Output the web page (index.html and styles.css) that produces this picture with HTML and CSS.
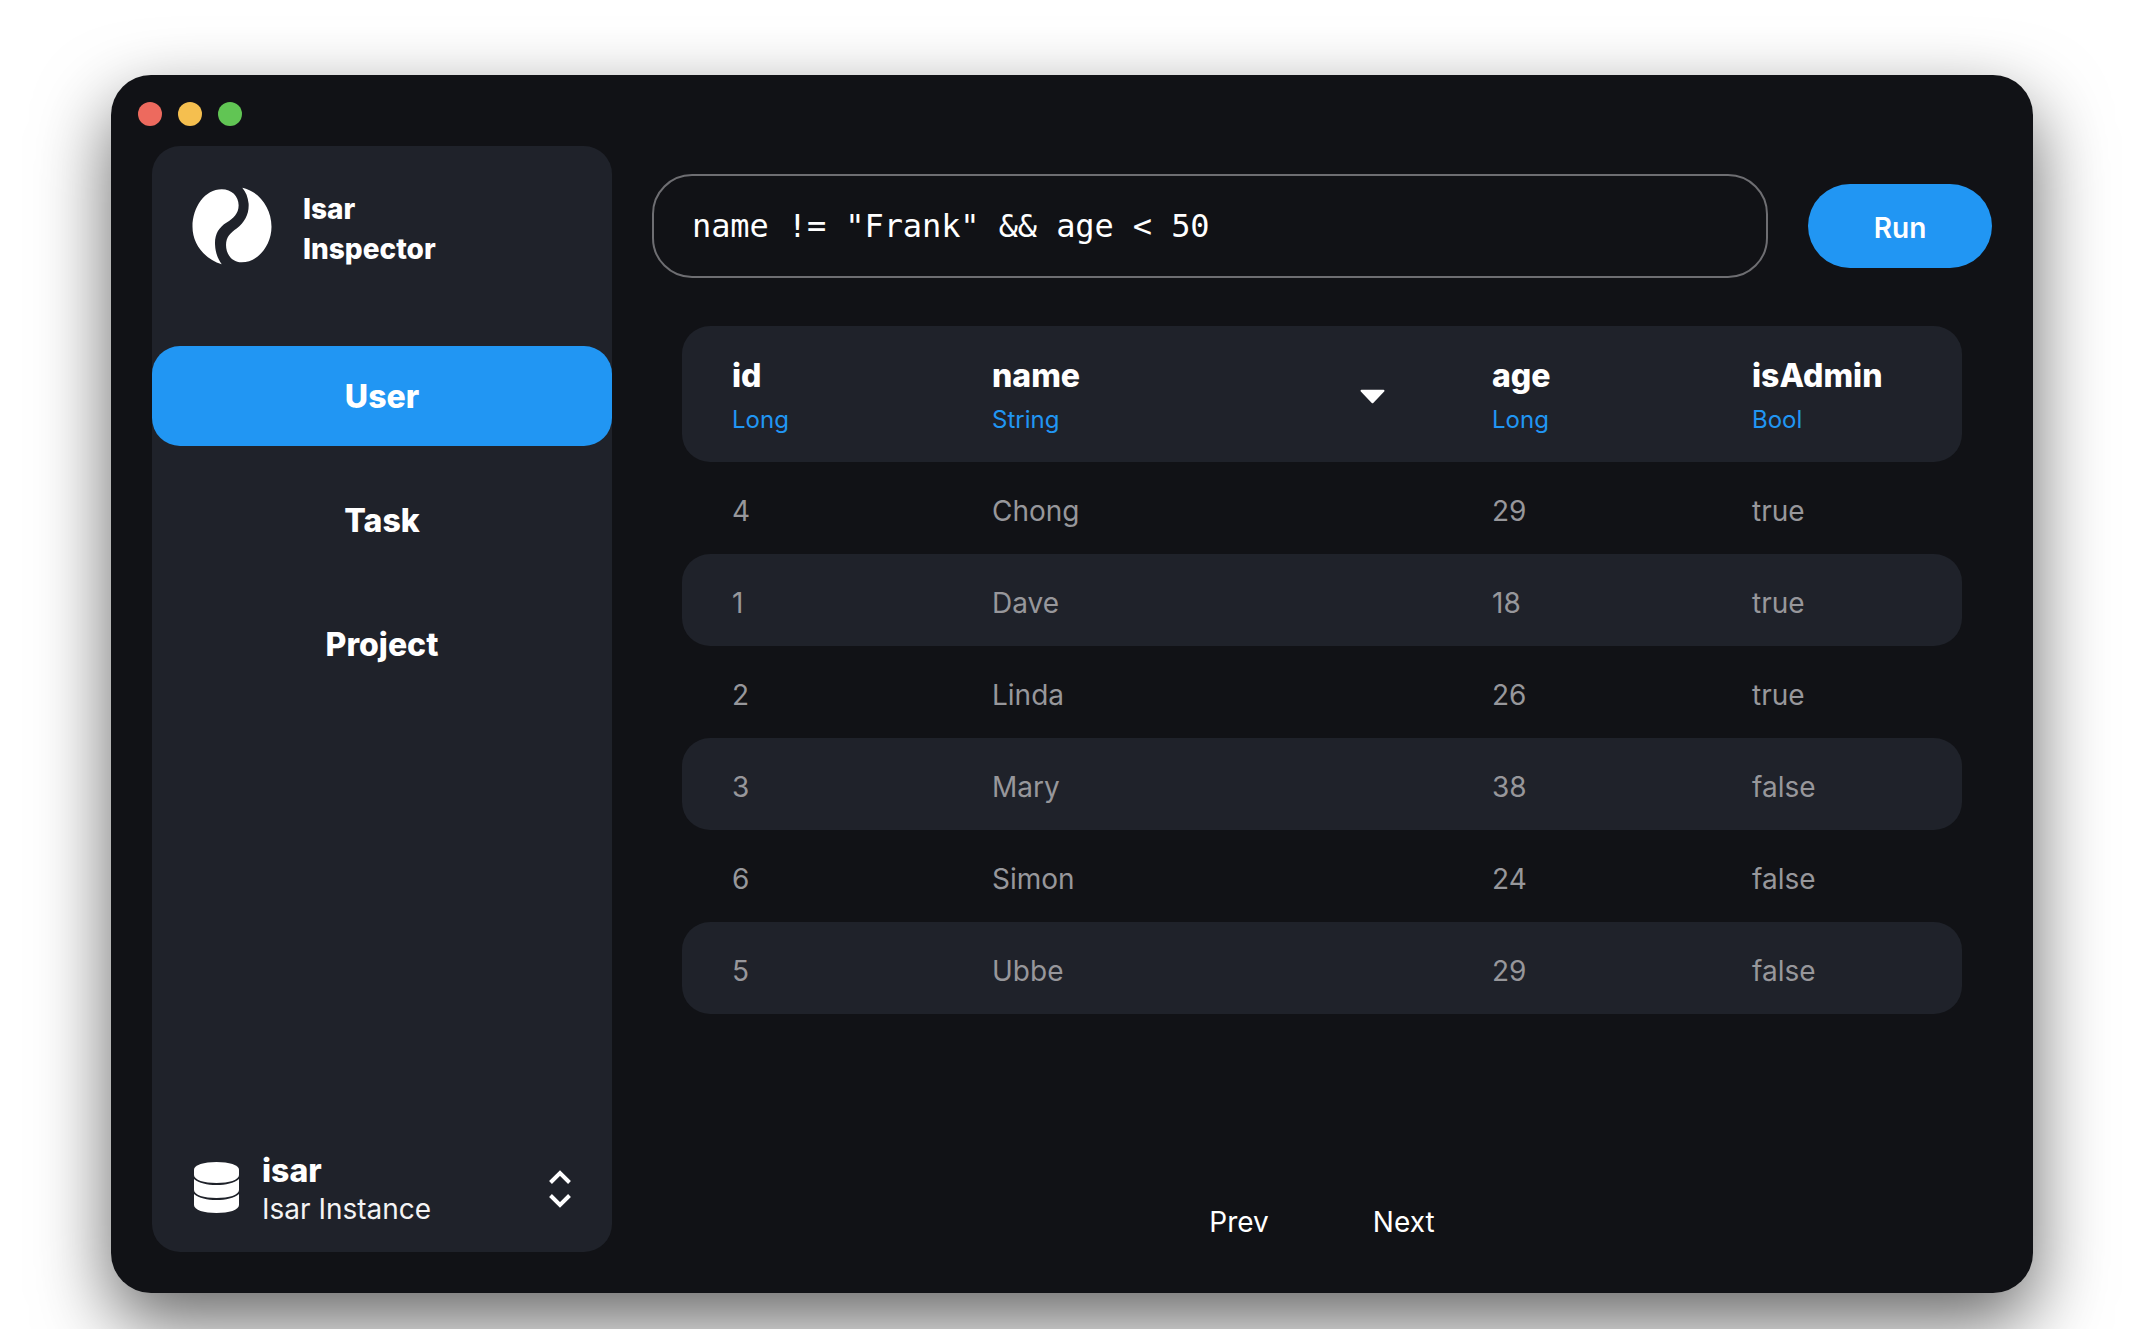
FILE: index.html
```html
<!DOCTYPE html>
<html lang="en">
<head>
<meta charset="utf-8">
<title>Isar Inspector</title>
<link rel="stylesheet" href="styles.css">
</head>
<body>
<div class="window">
  <div class="titlebar">
    <span class="dot dot-red"></span>
    <span class="dot dot-yellow"></span>
    <span class="dot dot-green"></span>
  </div>
  <div class="body">
    <aside class="sidebar">
      <div class="brand">
        <svg class="logo" viewBox="66 50 240 235" width="80" height="78" aria-hidden="true">
          <path fill="#fff" d="M155 283C100 265 67 220 67 170C67 110 105 57 155 57C185 57 206 78 206 105C206 130 190 145 170 157C145 172 133 195 135 225C136 250 145 268 155 283Z"/>
          <path fill="#fff" d="M217 52C265 62 305 110 305 170C305 225 265 277 215 277C188 277 168 255 168 225C168 200 182 188 200 175C225 157 238 130 236 100C234 80 228 65 217 52Z"/>
        </svg>
        <div class="brand-name">Isar<br>Inspector</div>
      </div>
      <nav class="nav">
        <div class="nav-item active">User</div>
        <div class="nav-item">Task</div>
        <div class="nav-item">Project</div>
      </nav>
      <div class="instance">
        <svg class="db" viewBox="0 0 45 51" width="45" height="51" aria-hidden="true">
          <path fill="#fff" d="M0 7.500C0 3 10 0 22.500 0S45 3 45 7.500V13C45 18 35 21 22.500 21S0 18 0 13Z"/>
          <path fill="#fff" d="M0 17C5 21 13 23 22.500 23S40 21 45 17V28C45 33 35 36 22.500 36S0 33 0 28Z"/>
          <path fill="#fff" d="M0 32C5 36 13 38 22.500 38S40 36 45 32V43C45 48 35 51 22.500 51S0 48 0 43Z"/>
        </svg>
        <div class="instance-text">
          <div class="instance-name">isar</div>
          <div class="instance-sub">Isar Instance</div>
        </div>
        <svg class="updown" viewBox="0 0 22 38" width="22" height="38" aria-hidden="true">
          <path fill="none" stroke="#fff" stroke-width="4" d="M1.500 12.500L11 3L20.500 12.500M1.500 25.500L11 35L20.500 25.500"/>
        </svg>
      </div>
    </aside>
    <main class="main">
      <div class="query">
        <div class="query-input">name != "Frank" &amp;&amp; age &lt; 50</div>
        <div class="run">Run</div>
      </div>
      <div class="table">
        <div class="row head">
          <div class="cell"><div class="col-name">id</div><div class="col-type">Long</div></div>
          <div class="cell sorted">
            <div><div class="col-name">name</div><div class="col-type">String</div></div>
            <svg class="sort" viewBox="0 0 24 14" width="25" height="15" aria-hidden="true"><path fill="#fff" stroke="#fff" stroke-width="2" stroke-linejoin="round" d="M1.500 1.500H22.500L12 12.500Z"/></svg>
          </div>
          <div class="cell"><div class="col-name">age</div><div class="col-type">Long</div></div>
          <div class="cell"><div class="col-name">isAdmin</div><div class="col-type">Bool</div></div>
        </div>
        <div class="row"><div>4</div><div>Chong</div><div>29</div><div>true</div></div>
        <div class="row alt"><div>1</div><div>Dave</div><div>18</div><div>true</div></div>
        <div class="row"><div>2</div><div>Linda</div><div>26</div><div>true</div></div>
        <div class="row alt"><div>3</div><div>Mary</div><div>38</div><div>false</div></div>
        <div class="row"><div>6</div><div>Simon</div><div>24</div><div>false</div></div>
        <div class="row alt"><div>5</div><div>Ubbe</div><div>29</div><div>false</div></div>
      </div>
      <div class="pager">
        <span>Prev</span>
        <span>Next</span>
      </div>
    </main>
  </div>
</div>
</body>
</html>
```
FILE: styles.css
```css
* { box-sizing: border-box; }
html, body { margin: 0; height: 100%; background: #fff; overflow: hidden; }
body { padding: 75px 0 0 111px; font-family: Inter, "Liberation Sans", sans-serif; color: #fff; }

.window {
  width: 1922px;
  height: 1218px;
  background: #111216;
  border-radius: 40px;
  box-shadow: 0 30px 75px rgba(0, 0, 0, 0.6);
  display: flex;
  flex-direction: column;
  padding: 0 41px 41px;
}
.titlebar { height: 71px; flex: none; display: flex; align-items: center; gap: 16px; padding-top: 7px; margin-left: -14px; }
.dot { width: 24px; height: 24px; border-radius: 50%; }
.dot-red { background: #ed6a5e; }
.dot-yellow { background: #f5bf4f; }
.dot-green { background: #61c554; }

.body { flex: 1; display: flex; min-height: 0; }

.sidebar {
  width: 460px;
  flex: none;
  background: #1f222a;
  border-radius: 28px;
  display: flex;
  flex-direction: column;
}
.brand { height: 200px; display: flex; align-items: flex-start; gap: 31px; padding: 41px 0 0 40px; flex: none; }
.logo { flex: none; }
.brand-name { font-size: 28px; font-weight: 800; line-height: 40px; margin-top: 2px; }

.nav { display: flex; flex-direction: column; gap: 24px; }
.nav-item { height: 100px; border-radius: 28px; display: flex; align-items: center; justify-content: center; font-size: 32px; font-weight: 800; }
.nav-item.active { background: #2196f3; }

.instance { margin-top: auto; height: 100px; display: flex; align-items: center; padding: 0 42px; margin-bottom: 12px; }
.db { flex: none; margin-top: -6px; }
.instance-text { margin-left: 23px; flex: 1; }
.instance-name { font-size: 32px; font-weight: 800; line-height: 38px; }
.instance-sub { font-size: 28px; line-height: 38px; color: #f4f4f5; }
.updown { flex: none; margin: -3px -1px 0 0; }

.main { flex: 1; min-width: 0; display: flex; flex-direction: column; padding-left: 40px; }
.query { display: flex; align-items: center; gap: 40px; margin-top: 28px; height: 104px; flex: none; }
.query-input {
  flex: 1;
  height: 104px;
  border: 2px solid #6e6e72;
  border-radius: 40px;
  display: flex;
  align-items: center;
  padding-left: 38px;
  font-family: "DejaVu Sans Mono", "Liberation Mono", monospace;
  font-size: 32px;
  letter-spacing: -0.1px;
}
.run { width: 184px; height: 84px; border-radius: 42px; background: #2196f3; display: flex; align-items: center; justify-content: center; font-size: 28px; font-weight: 600; flex: none; padding-top: 4px; }

.table { margin: 48px 30px 0; flex: none; }
.row {
  height: 92px;
  display: grid;
  grid-template-columns: 260px 500px 260px 1fr;
  align-items: center;
  padding: 5px 50px 0;
  border-radius: 28px;
  font-size: 28px;
  color: #97979b;
}
.row.alt { background: #1f222a; }
.row.head { height: 136px; background: #1f222a; padding-top: 3px; }
.sorted { display: flex; align-items: center; justify-content: space-between; padding-right: 107px; }
.col-name { font-size: 32px; font-weight: 800; line-height: 38px; color: #fff; }
.col-type { font-size: 24px; line-height: 30px; margin-top: 10px; color: #2196f3; }
.sort { margin-top: 1px; }

.pager { margin-top: auto; margin-bottom: 10px; display: flex; justify-content: center; gap: 104px; font-size: 28px; line-height: 40px; }
```
